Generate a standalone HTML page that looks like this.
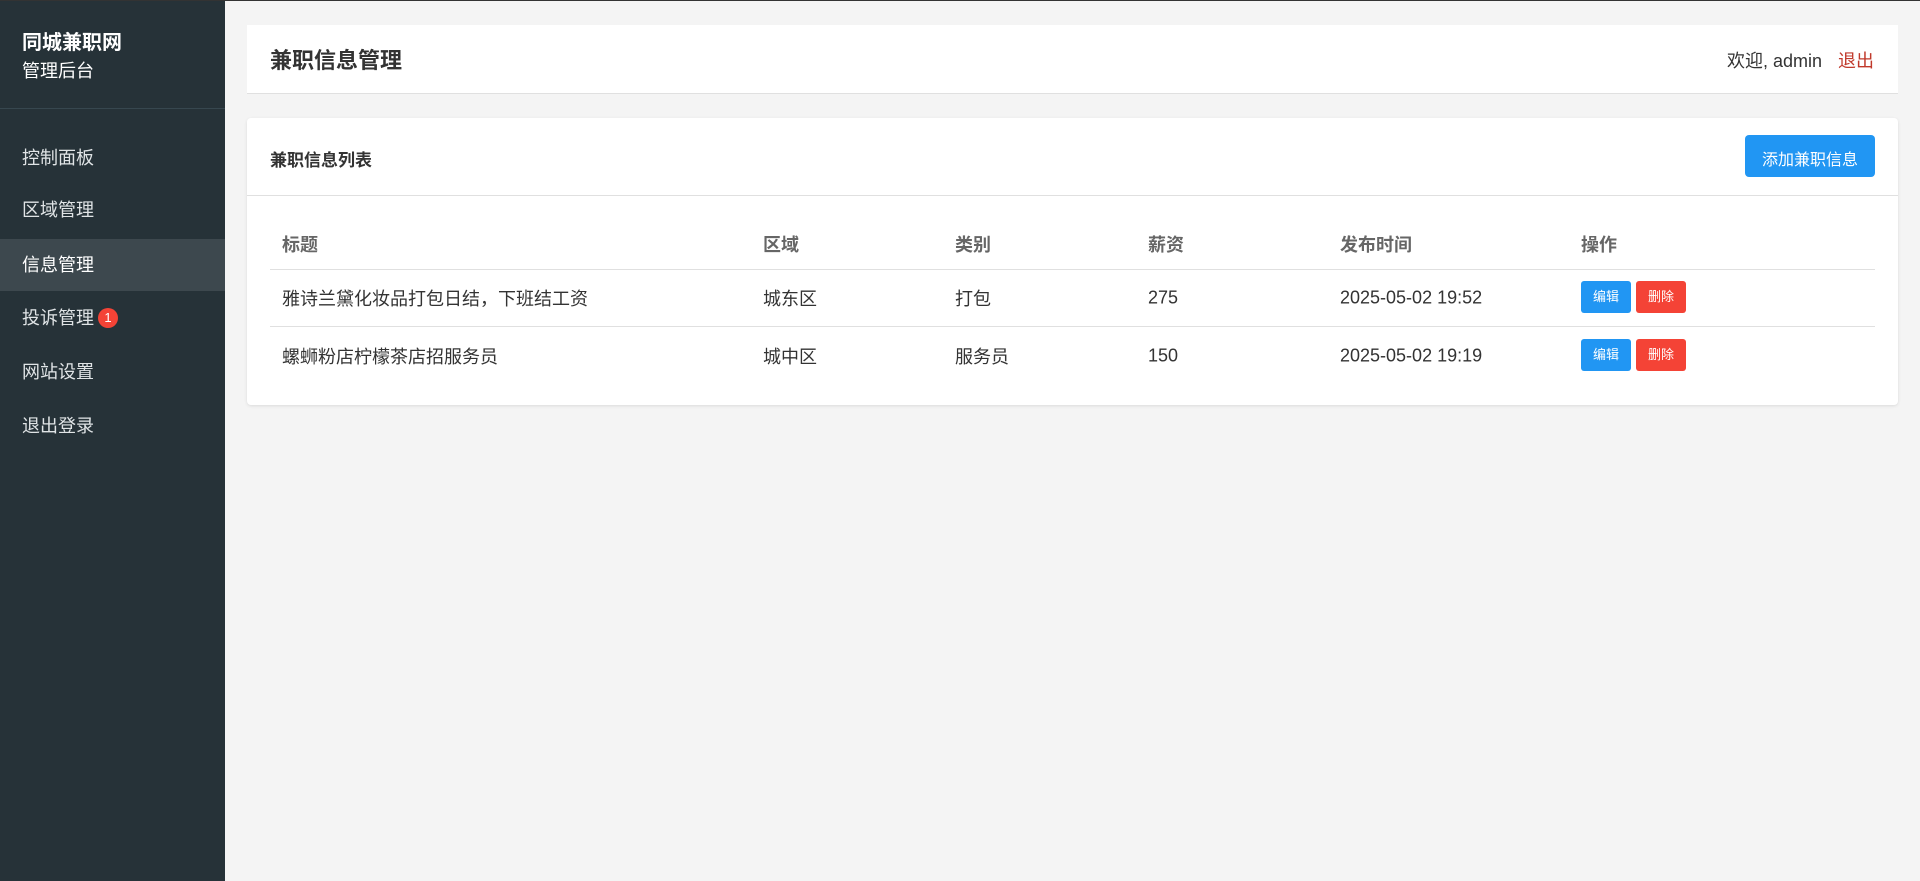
<!DOCTYPE html>
<html><head><meta charset="utf-8"><style>
*{margin:0;padding:0;box-sizing:border-box}
body{width:1920px;height:880px;background:#f4f4f4;font-family:"Liberation Sans","Noto Sans CJK SC",sans-serif;position:relative;overflow:hidden;color:#333;border-top:1px solid #333}
.side{position:absolute;left:0;top:0;width:225px;height:880px;background:#263238;color:#eceff1}
.brand{position:absolute;left:22px;top:25px;font-size:20px;font-weight:bold;color:#fff}
.sub{position:absolute;left:22px;top:56px;font-size:18px;color:#fff}
.div{position:absolute;left:0;top:107px;width:225px;height:1px;background:#37474f}
.mi{position:absolute;left:0;width:225px;height:52px;line-height:52px;padding-left:22px;font-size:18px;color:#e0e4e6}
.mi.act{background:#3d484e;color:#fff}
.badge{display:inline-block;width:20px;height:20px;border-radius:50%;background:#f44336;color:#fff;font-size:13px;line-height:20px;text-align:center;vertical-align:2px;margin-left:4px}
.hd{position:absolute;left:247px;top:24px;width:1651px;height:69px;background:#fff;border-bottom:1px solid #e0e0e0}
.hd h1{position:absolute;left:23px;top:18px;font-size:22px;font-weight:bold;color:#333}
.hd .r{position:absolute;right:24px;top:22px;font-size:18px;color:#333}
.hd .r span{color:#c0392b;margin-left:16px}
.card{position:absolute;left:247px;top:117px;width:1651px;height:287px;background:#fff;border-radius:4px;box-shadow:0 1px 3px rgba(0,0,0,.1)}
.ch{position:absolute;left:0;top:0;width:100%;height:78px;border-bottom:1px solid #e0e0e0}
.ch h2{position:absolute;left:23px;top:28px;font-size:17px;font-weight:bold;color:#333}
.btn{position:absolute;right:23px;top:17px;width:130px;height:42px;background:#2196f3;color:#fff;border-radius:4px;font-size:16px;display:flex;align-items:center;justify-content:center;padding-top:3px}
.t{position:absolute;font-size:18px;color:#333;transform:translateY(-50%);white-space:nowrap}
.th{font-weight:bold;color:#666}
.line{position:absolute;left:23px;width:1605px;height:1px;background:#e0e0e0}
.sb{position:absolute;width:50px;height:32px;border-radius:3px;color:#fff;font-size:13px;line-height:32px;text-align:center}
</style></head><body>
<div class="side">
<div class="brand">同城兼职网</div>
<div class="sub">管理后台</div>
<div class="div"></div>
<div class="mi" style="top:131px">控制面板</div>
<div class="mi" style="top:183px">区域管理</div>
<div class="mi act" style="top:238px">信息管理</div>
<div class="mi" style="top:291px">投诉管理<span class="badge">1</span></div>
<div class="mi" style="top:345px">网站设置</div>
<div class="mi" style="top:399px">退出登录</div>
</div>
<div class="hd"><h1>兼职信息管理</h1><div class="r">欢迎, admin<span>退出</span></div></div>
<div class="card">
<div class="ch"><h2>兼职信息列表</h2><div class="btn">添加兼职信息</div></div>
<div class="t th" style="left:35px;top:126px">标题</div>
<div class="t th" style="left:516px;top:126px">区域</div>
<div class="t th" style="left:708px;top:126px">类别</div>
<div class="t th" style="left:901px;top:126px">薪资</div>
<div class="t th" style="left:1093px;top:126px">发布时间</div>
<div class="t th" style="left:1334px;top:126px">操作</div>
<div class="line" style="top:151px"></div>
<div class="t" style="left:35px;top:180px">雅诗兰黛化妆品打包日结，下班结工资</div>
<div class="t" style="left:516px;top:180px">城东区</div>
<div class="t" style="left:708px;top:180px">打包</div>
<div class="t" style="left:901px;top:180px">275</div>
<div class="t" style="left:1093px;top:180px">2025-05-02 19:52</div>
<div class="sb" style="left:1334px;top:163px;background:#2196f3">编辑</div>
<div class="sb" style="left:1389px;top:163px;background:#f44336">删除</div>
<div class="line" style="top:208px"></div>
<div class="t" style="left:35px;top:238px">螺蛳粉店柠檬茶店招服务员</div>
<div class="t" style="left:516px;top:238px">城中区</div>
<div class="t" style="left:708px;top:238px">服务员</div>
<div class="t" style="left:901px;top:238px">150</div>
<div class="t" style="left:1093px;top:238px">2025-05-02 19:19</div>
<div class="sb" style="left:1334px;top:221px;background:#2196f3">编辑</div>
<div class="sb" style="left:1389px;top:221px;background:#f44336">删除</div>
</div>
</body></html>
